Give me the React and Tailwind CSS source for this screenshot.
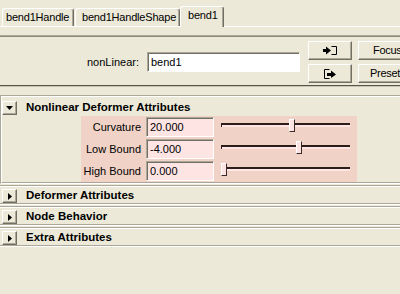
const raised =
  "border border-t-white border-l-white border-r-[#716f64] border-b-[#716f64] shadow-[inset_-1px_-1px_0_#aca899]";
const sunken =
  "border border-t-[#aca899] border-l-[#aca899] border-r-white border-b-white shadow-[inset_1px_1px_0_#716f64]";

const attrs = [
  { label: "Curvature", value: "20.000", thumb: 68 },
  { label: "Low Bound", value: "-4.000", thumb: 75 },
  { label: "High Bound", value: "0.000", thumb: 0 },
];

const collapsed = ["Deformer Attributes", "Node Behavior", "Extra Attributes"];

function Tab({ label, active, className }) {
  return (
    <div
      className={`${
        active ? "relative -mb-px h-[21px] pb-[3px]" : "h-[18px]"
      } flex shrink-0 items-center rounded-t-[3px] border-t border-l border-r border-t-white border-l-white border-r-[#716f64] bg-[#ece9d8] tracking-[-0.2px] shadow-[inset_-1px_0_0_#aca899] ${className}`}
    >
      {label}
    </div>
  );
}

function ArrowButton({ open, className }) {
  return (
    <div className={`flex h-[14px] w-[15px] shrink-0 items-center justify-center bg-[#ece9d8] ${raised} ${className}`}>
      {open ? (
        <svg width="7" height="4" viewBox="0 0 7 4">
          <polygon points="0,0 7,0 3.5,4" fill="#000" />
        </svg>
      ) : (
        <svg width="4" height="7" viewBox="0 0 4 7">
          <polygon points="0,0 4,3.5 0,7" fill="#000" />
        </svg>
      )}
    </div>
  );
}

function Slider({ thumb }) {
  return (
    <div className="relative ml-[7px] flex h-[22px] w-[129px] shrink-0 items-center pb-[4px]">
      <div className="h-[4px] w-full border-t-2 border-l border-t-[#2b1d1a] border-l-[#2b1d1a] bg-[#ffe6e4]" />
      <div
        className="absolute top-[3px] h-[13px] w-[6px] border border-t-white border-l-white border-r-[#3a2a26] border-b-[#3a2a26] bg-[#fde4e2]"
        style={{ left: thumb }}
      />
    </div>
  );
}

export default function App() {
  return (
    <div className="h-[294px] w-[400px] overflow-hidden bg-[#ece9d8] font-['Liberation_Sans',Arial,sans-serif] text-[11px] leading-none text-black">
      <div className="flex h-[27px] items-end border-b border-white pl-[2px]">
        <Tab label="bend1Handle" className="w-[72px] pl-[3px]" />
        <Tab label="bend1HandleShape" className="ml-[1px] w-[105px] pl-[6px]" />
        <Tab label="bend1" active className="w-[44px] pl-[7px]" />
      </div>
      <div className="mt-[8px] h-[2px] border-t border-b border-t-[#aca899] border-b-[#8d8a7b]" />

      <div className="flex h-[48px] items-center overflow-hidden pt-[2px]">
        <span className="w-[139px] shrink-0 text-right">nonLinear:</span>
        <div className={`ml-[8px] flex h-[20px] w-[153px] shrink-0 items-center bg-white pl-[3px] ${sunken}`}>bend1</div>
        <div className="ml-[8px] flex shrink-0 flex-col gap-[4px]">
          <div className={`flex h-[19px] w-[44px] items-center justify-center bg-[#ece9d8] ${raised}`}>
            <svg width="15" height="9" viewBox="0 0 15 9">
              <rect x="0" y="3" width="4" height="3" fill="#000" />
              <polygon points="3,0.5 8,4.5 3,8.5" fill="#000" />
              <path d="M8.5 0.5 H13.5 V8.5 H8.5" fill="none" stroke="#000" strokeWidth="1" />
            </svg>
          </div>
          <div className={`flex h-[19px] w-[44px] items-center justify-center bg-[#ece9d8] ${raised}`}>
            <svg width="13" height="10" viewBox="0 0 13 10">
              <path d="M5.5 0.5 H0.5 V9.5 H5.5" fill="none" stroke="#000" strokeWidth="1" />
              <rect x="3" y="4" width="5" height="3" fill="#000" />
              <polygon points="7,1.5 12,5.5 7,9" fill="#000" />
            </svg>
          </div>
        </div>
        <div className="ml-[6px] flex shrink-0 flex-col gap-[4px] tracking-[-0.3px]">
          <div className={`flex h-[19px] w-[58px] items-center bg-[#ece9d8] pl-[14px] ${raised}`}>Focus</div>
          <div className={`flex h-[19px] w-[58px] items-center bg-[#ece9d8] pl-[11px] ${raised}`}>Preset</div>
        </div>
      </div>
      <div className="h-[2px] border-t border-b border-t-[#55534a] border-b-[#c9c6b6]" />

      <div className="mt-[8px] border-t border-l border-b border-t-[#aca899] border-l-[#aca899] border-b-white">
        <div className="border-t border-l border-b border-t-white border-l-white border-b-[#aca899]">
          <div className="flex h-[19px] items-center pt-[3px]">
            <ArrowButton open />
            <span className="ml-[9px] text-[11.5px] font-bold">Nonlinear Deformer Attributes</span>
          </div>
          <div className="ml-[79px] w-[276px] bg-[#f0d2c6]">
            {attrs.map((a) => (
              <div key={a.label} className="flex h-[22px] items-center">
                <span className="w-[60px] shrink-0 text-right">{a.label}</span>
                <div className={`ml-[5px] flex h-[20px] w-[68px] shrink-0 items-center bg-[#ffe4e4] pl-[3px] ${sunken}`}>
                  {a.value}
                </div>
                <Slider thumb={a.thumb} />
              </div>
            ))}
          </div>
        </div>
      </div>

      {collapsed.map((name) => (
        <div key={name} className="mt-[1px] border-t border-b border-t-[#aca899] border-b-white">
          <div className="border-t border-b border-t-white border-b-[#aca899]">
            <div className="flex h-[16px] items-center pt-[2px]">
              <ArrowButton className="ml-[2px] h-[13px]" />
              <span className="ml-[9px] text-[11.5px] font-bold">{name}</span>
            </div>
          </div>
        </div>
      ))}
    </div>
  );
}
